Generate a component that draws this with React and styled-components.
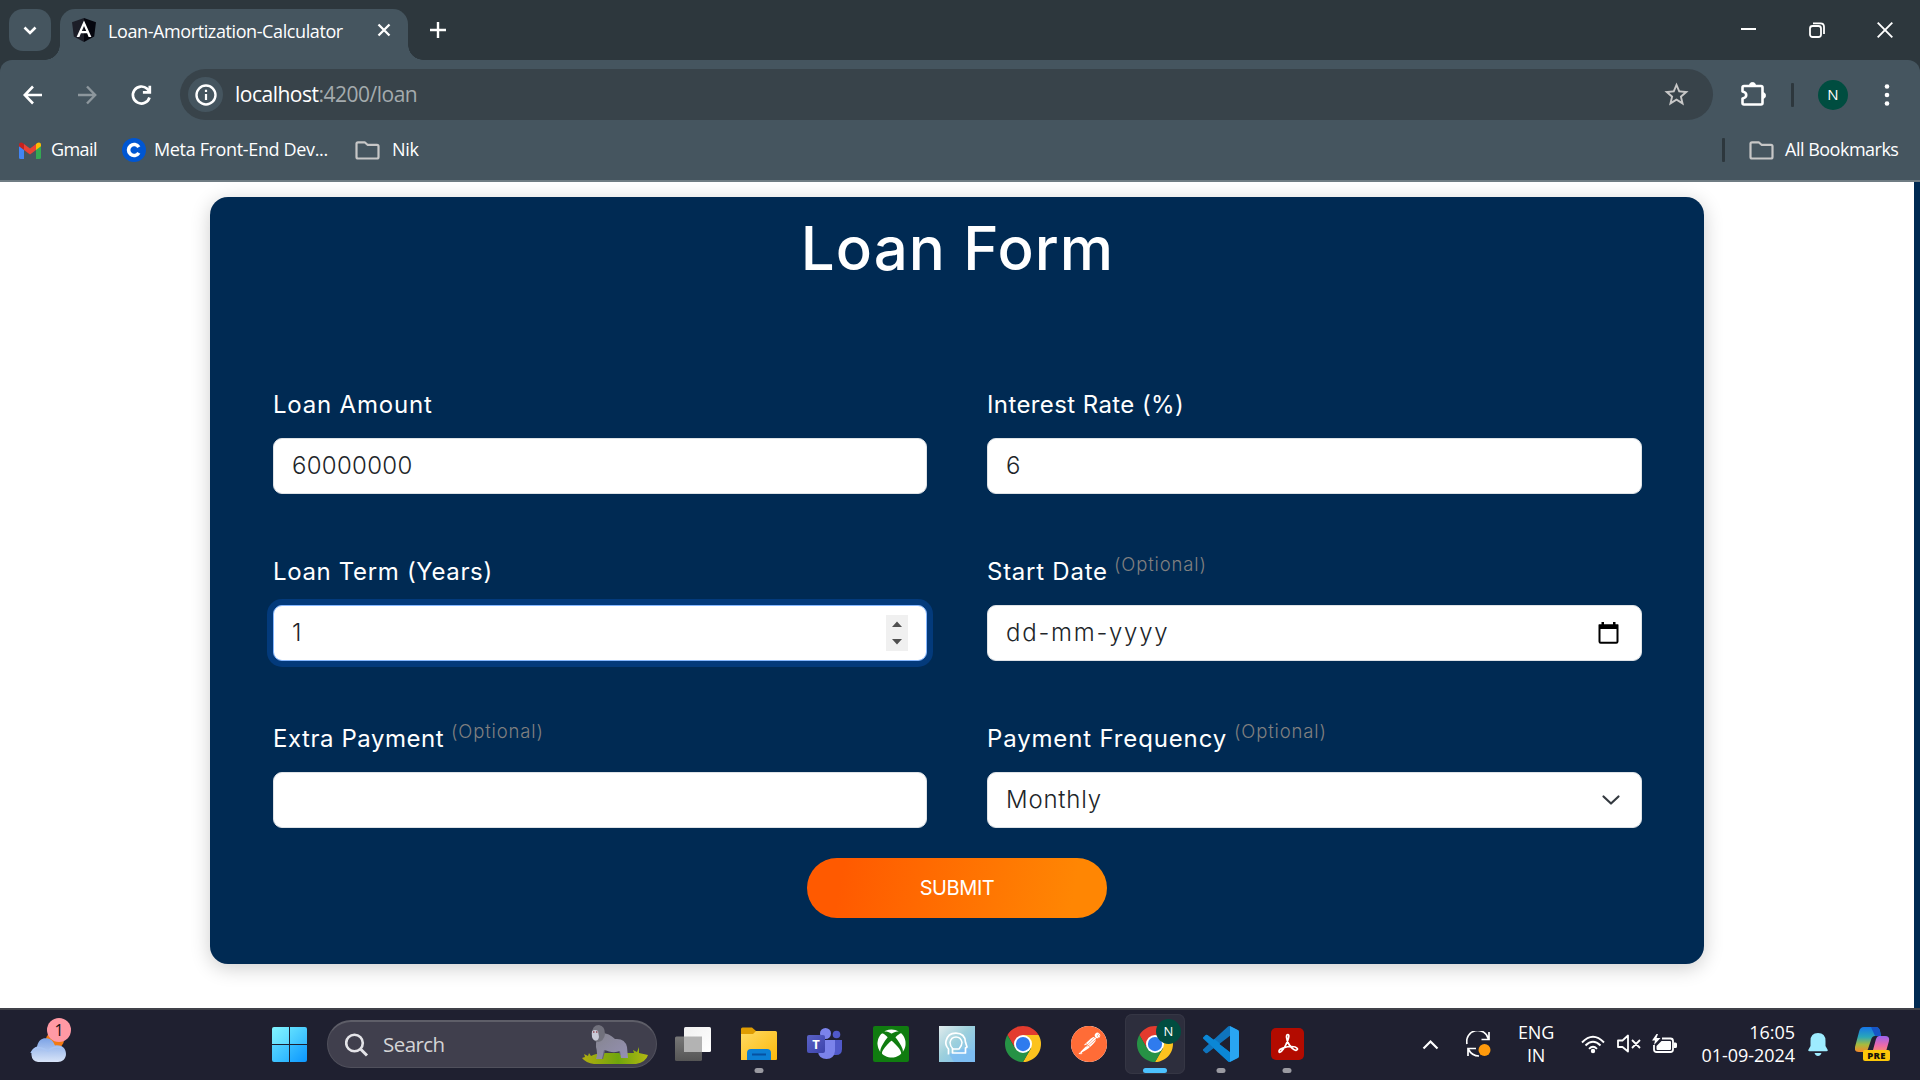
import React from 'react';
import styled, { createGlobalStyle, css } from 'styled-components';
import { FaXbox } from 'react-icons/fa';
import { SiPostman } from 'react-icons/si';
import { MdStarBorder } from 'react-icons/md';

const GlobalStyle = createGlobalStyle`
  * { box-sizing: border-box; }
  body { margin: 0; overflow: hidden; background: #fff; }
  svg { display: block; flex: none; }
`;

const system = `'Open Sans', 'Noto Sans', sans-serif`;
const geometric = `Inter, 'Liberation Sans', sans-serif`;

const Desktop = styled.div`
  width: 1920px;
  height: 1080px;
  display: flex;
  flex-direction: column;
  font-family: ${system};
  color: #fff;
`;

const Text = styled.span`
  display: block;
  flex: none;
  white-space: nowrap;
  width: ${p => (p.$w ? `${p.$w}px` : 'auto')};
  font-size: ${p => p.$size || 18}px;
  letter-spacing: ${p => p.$ls || 0}px;
  margin-left: ${p => p.$ml || 0}px;
  margin-top: ${p => p.$mt || 0}px;
  line-height: 24px;
`;

/* ---------- browser chrome ---------- */

const TabStrip = styled.div`
  height: 60px;
  flex: none;
  display: flex;
  align-items: flex-start;
  padding: 9px 0 0 9px;
  background: #2d373d;
`;

const TabSearch = styled.div`
  width: 42px;
  height: 42px;
  border-radius: 14px;
  display: grid;
  place-items: center;
  background: #45555f;
`;

const Tab = styled.div`
  position: relative;
  width: 348px;
  height: 51px;
  margin-left: 9px;
  padding: 0 0 9px 12px;
  border-radius: 15px 15px 0 0;
  display: flex;
  align-items: center;
  background: #45555f;

  &::before, &::after {
    content: '';
    position: absolute;
    bottom: 0;
    width: 15px;
    height: 15px;
  }
  &::before { left: -15px; background: radial-gradient(circle at 0 0, transparent 14.5px, #45555f 15px); }
  &::after { right: -15px; background: radial-gradient(circle at 100% 0, transparent 14.5px, #45555f 15px); }
`;

const NewTab = styled.div`
  height: 42px;
  margin-left: 22px;
  display: flex;
  align-items: center;
`;

const WindowButtons = styled.div`
  margin-left: auto;
  height: 42px;
  padding-right: 27px;
  display: flex;
  align-items: center;
  gap: 52px;
`;

const ToolbarBack = styled.div`
  flex: none;
  background: #2d373d;
`;

const Toolbar = styled.div`
  height: 122px;
  border-radius: 12px 12px 0 0;
  border-bottom: 2px solid #6f7c83;
  background: #45555f;
`;

const NavRow = styled.div`
  height: 69px;
  padding: 9px 0 9px 21px;
  display: flex;
  align-items: center;
`;

const NavIcons = styled.div`
  width: 159px;
  display: flex;
  gap: 30px;
`;

const AddressBar = styled.div`
  width: 1533px;
  height: 51px;
  padding: 0 22px 0 8px;
  border-radius: 26px;
  display: flex;
  align-items: center;
  background: #38434a;
`;

const SiteInfo = styled.div`
  width: 35px;
  height: 35px;
  border-radius: 50%;
  display: grid;
  place-items: center;
  background: #45555f;
`;

const Url = styled.span`
  flex: 1;
  margin: -1px 0 0 12px;
  font-size: 21px;
  line-height: 28px;
  letter-spacing: -0.5px;
  color: #a4abae;
  b { font-weight: 400; color: #fff; }
`;

const Divider = styled.div`
  width: 3px;
  height: 24px;
  border-radius: 1px;
  background: #2d373d;
  margin: ${p => p.$m};
`;

const Avatar = styled.div`
  width: ${p => p.$d}px;
  height: ${p => p.$d}px;
  border-radius: 50%;
  display: grid;
  place-items: center;
  background: #004d40;
  font-size: ${p => p.$size}px;
  line-height: 1;
`;

const BookmarkRow = styled.div`
  height: 51px;
  padding: 0 22px 9px 19px;
  display: flex;
  align-items: center;
`;

const Push = styled.div`
  flex: 1;
`;

/* ---------- page ---------- */

const Viewport = styled.main`
  height: 826px;
  flex: none;
  padding: 15px 0 0 210px;
  background: #fff;
  border-right: 6px solid #002a53;
  overflow: hidden;
`;

const Card = styled.section`
  width: 1494px;
  height: 767px;
  padding: 17px 62px 0 63px;
  border-radius: 18px;
  background: #002a53;
  box-shadow: 0 4px 20px rgba(0, 0, 0, 0.2);
  font-family: ${geometric};
  display: flex;
  flex-direction: column;
  align-items: center;
`;

const Title = styled.h1`
  margin: -1px 0 0;
  height: 72px;
  font-size: 60px;
  line-height: 71px;
  font-weight: 500;
  letter-spacing: 1.1px;
`;

const FormGrid = styled.div`
  width: 100%;
  margin-top: 99px;
  display: grid;
  grid-template-columns: 654px 655px;
  column-gap: 60px;
  grid-auto-rows: 167px;
`;

const Label = styled.label`
  display: flex;
  height: 54px;
  padding-top: 3px;
  font-size: 24px;
  line-height: 36px;
  font-weight: 400;
  white-space: nowrap;
`;

const LabelText = styled.span`
  width: ${p => p.$w}px;
  letter-spacing: ${p => p.$ls}px;
`;

const Optional = styled.span`
  margin: -8px 0 0 7px;
  font-size: 18.5px;
  font-weight: 300;
  letter-spacing: 0.85px;
  color: #808080;
`;

const Control = styled.div`
  height: 56px;
  border-radius: 9px;
  border: 1px solid #dee2e6;
  padding: 0 18px;
  display: flex;
  align-items: center;
  justify-content: space-between;
  background: #fff;
  color: #212529;
  font-size: 24px;
  line-height: 28px;
  font-weight: 300;
  letter-spacing: ${p => p.$ls || 0}px;
  ${p => p.$focused && css`
    border-color: #86b7fe;
    box-shadow: 0 0 0 6px #033a7b;
  `}
`;

const Spinner = styled.div`
  width: 22px;
  height: 36px;
  display: grid;
  place-items: center;
  background: #f0f0f0;
`;

const Submit = styled.button`
  flex: none;
  width: 300px;
  height: 60px;
  margin: -27px 1px 0 0;
  border: 0;
  border-radius: 30px;
  background: linear-gradient(100deg, #ff5a00 12%, #ff8603 88%);
  color: #fff;
  font-family: ${geometric};
  font-size: 20px;
  letter-spacing: -0.4px;
`;

/* ---------- taskbar ---------- */

const Taskbar = styled.footer`
  height: 72px;
  flex: none;
  border-top: 2px solid #404149;
  padding-bottom: 2px;
  background: #1f2030;
  display: flex;
  align-items: center;
`;

const Widgets = styled.div`
  position: relative;
  width: 36px;
  height: 70px;
  margin-left: 30px;
  padding-top: 22px;
`;

const Badge = styled.span`
  position: absolute;
  left: 17px;
  top: 9px;
  width: 24px;
  height: 24px;
  border-radius: 50%;
  background: #ff99a4;
  color: #111;
  font-size: 16px;
  line-height: 24px;
  text-align: center;
`;

const StartButton = styled.div`
  width: 35px;
  height: 35px;
  margin: 0 0 0 206px;
  display: grid;
  grid-template-columns: 17px 17px;
  gap: 1px;
  border-radius: 2px;
  overflow: hidden;
`;

const Pane = styled.i`
  height: 17px;
  background: ${p => p.$bg};
`;

const SearchBox = styled.div`
  width: 330px;
  height: 48px;
  margin: 0 0 0 20px;
  padding: 0 7px 0 17px;
  border-radius: 24px;
  border: 1px solid #50505c;
  border-top: 2px solid #5e5e68;
  display: flex;
  align-items: center;
  background: #403f4d;
  color: #d4d4d6;
`;

const Apps = styled.div`
  display: flex;
  margin-left: 6px;
  gap: 6px;
`;

const AppSlot = styled.div`
  position: relative;
  width: 60px;
  height: 60px;
  padding-bottom: 1px;
  border-radius: 7px;
  display: grid;
  place-items: center;
  ${p => p.$active && css`
    background: #2d2e3d;
    box-shadow: inset 0 0 0 1px #353644;
  `}
  &::after {
    content: '';
    display: ${p => (p.$running ? 'block' : 'none')};
    position: absolute;
    bottom: 1px;
    left: 50%;
    transform: translateX(-50%);
    width: ${p => (p.$active ? 24 : 9)}px;
    height: 5px;
    border-radius: 3px;
    background: ${p => (p.$active ? '#4cc2ff' : '#9a9aa1')};
  }
`;

const ProfileMark = styled.div`
  position: absolute;
  right: 4px;
  top: 5px;
`;

const Tray = styled.div`
  margin-left: auto;
  padding-right: 30px;
  display: flex;
  align-items: center;
`;

const Stack = styled.div`
  width: ${p => p.$w}px;
  margin-left: ${p => p.$ml}px;
  text-align: ${p => p.$align};
  font-size: 18px;
  line-height: 23.5px;
  letter-spacing: ${p => p.$ls}px;
  white-space: nowrap;
`;

const Spaced = styled.div`
  flex: none;
  margin-left: ${p => p.$ml}px;
`;

/* ---------- drawings ---------- */

const Line = ({ w = 18, h = w, box = `0 0 ${w} ${h}`, sw = 2, color = '#fff', children }) => (
  <svg width={w} height={h} viewBox={box} fill="none" stroke={color} strokeWidth={sw}>{children}</svg>
);

const Folder = () => (
  <Line w={25} h={19} sw={2.2} color="#c7c7c7">
    <path d="M1.500 3.200V16q0 1.500 1.500 1.500h19q1.500 0 1.500-1.500V5.300q0-1.500-1.500-1.500H12.500L9.700 1.300H3q-1.500 0-1.500 1.500z" strokeLinejoin="round" />
  </Line>
);

const AngularLogo = () => (
  <svg width="24" height="24" viewBox="0 0 24 24">
    <path d="M12 0 0 4.200l1.800 14.300L12 24z" fill="#1c1e28" />
    <path d="M12 0l12 4.200-1.800 14.300L12 24z" fill="#05060e" />
    <path d="M12 2.600 4.600 19h2.800l1.500-3.700h6.200l1.500 3.700h2.800zM12 8l2.200 5H9.800z" fill="#fff" fillRule="evenodd" />
  </svg>
);

const GmailLogo = () => (
  <svg width="22" height="17" viewBox="0 0 22 17">
    <path d="M0 4v11.500Q0 17 1.500 17H5V7z" fill="#4285f4" />
    <path d="M22 4v11.500q0 1.500-1.500 1.500H17V7z" fill="#34a853" />
    <path d="M5 2v6l6 4.600L17 8V2l-6 4.600z" fill="#ea4335" />
    <path d="M0 2.500V4.300L5 8V2L3.800 1C2.200-.3 0 .6 0 2.500z" fill="#c5221f" />
    <path d="M22 2.500V4.300L17 8V2l1.200-1C19.800-.3 22 .6 22 2.500z" fill="#fbbc04" />
  </svg>
);

const CourseraLogo = () => (
  <svg width="24" height="24" viewBox="0 0 24 24">
    <circle cx="12" cy="12" r="12" fill="#0056d2" />
    <path d="M16.800 9.200A5.500 5.500 0 1 0 16.800 14.800" fill="none" stroke="#fff" strokeWidth="3.600" />
  </svg>
);

const ChromeLogo = () => (
  <svg width="36" height="36" viewBox="0 0 48 48">
    <path d="M3.220 12A24 24 0 0 1 44.780 12H24L13.610 30z" fill="#e33b2e" />
    <path d="M44.780 12A24 24 0 0 1 24 48L34.390 30 24 12z" fill="#fcc31e" />
    <path d="M24 48A24 24 0 0 1 3.220 12L13.610 30H34.390z" fill="#269245" />
    <circle cx="24" cy="24" r="12" fill="#fff" />
    <circle cx="24" cy="24" r="9.500" fill="#2f7bee" />
  </svg>
);

const Gorilla = () => (
  <svg width="67" height="40" viewBox="0 0 67 40">
    <defs>
      <linearGradient id="grass" x2="1"><stop stopColor="#b2ae10" /><stop offset=".55" stopColor="#6fa50c" /><stop offset="1" stopColor="#b2b912" /></linearGradient>
      <linearGradient id="fur" x2="1" y2="1"><stop stopColor="#85858f" /><stop offset="1" stopColor="#9590b3" /></linearGradient>
    </defs>
    <path d="M0 33l3-1-1-3 4 2 1-3 2 3q5-3 15-3l28 0-1-3 4 2 2-5v6l9 2q-2 7-12 9H12Q4 38 0 33z" fill="url(#grass)" />
    <path d="M17 22h7l-3 12h-5zM35 20h6l1 10h-4z" fill="#646178" />
    <path d="M20 8Q27 8 33 14q10-1 12 8l1 11h-7l-1-7q-5 2-11 .500-3-1.500-5-1.500l-2 9h-6q2-5 0-12-1-8 6-14z" fill="url(#fur)" />
    <path d="M10 9Q10 0 17 0q6 1 6 9-1 7-7 8-6-1-6-8z" fill="#71717c" />
    <path d="M10 6q3-2 6 0l1 6q-1 5-5 3-3-2-2-9z" fill="#c9cad7" />
    <path d="M11 7h1.500M14 7h1.500" stroke="#8f4854" strokeWidth="1.400" />
  </svg>
);

const FilesLogo = () => (
  <svg width="36" height="34" viewBox="0 0 36 34">
    <defs><linearGradient id="files" x2="1" y2="1"><stop stopColor="#ffda62" /><stop offset="1" stopColor="#fbb90b" /></linearGradient></defs>
    <path d="M0 2q0-1.500 1.500-1.500H11L15 4v5H0z" fill="#df9c02" />
    <path d="M0 7h12l3-3h19.500Q36 4 36 5.500V32q0 1-1 1H0z" fill="url(#files)" />
    <path d="M6 33v-7q0-4 4-4h16q4 0 4 4v7z" fill="#0c7fd4" />
    <path d="M11 27.500h14" stroke="#0651a0" strokeWidth="2" />
  </svg>
);

const TeamsMark = styled.div`
  position: relative;
  width: 36px;
  height: 34px;
  span {
    position: absolute;
    left: 0;
    top: 8px;
    width: 18px;
    height: 18px;
    border-radius: 2px;
    background: linear-gradient(135deg, #5a62c6, #3c43ab);
    font-size: 13px;
    font-weight: 700;
    line-height: 18px;
    text-align: center;
  }
`;

const TeamsLogo = () => (
  <TeamsMark>
    <svg width="36" height="34" viewBox="0 0 36 34">
      <circle cx="29.500" cy="7.500" r="3.800" fill="#5059c9" />
      <path d="M26 13h9v9q0 6-6 6h-3z" fill="#5059c9" />
      <circle cx="18.500" cy="6.500" r="5.500" fill="#7b83eb" />
      <path d="M11 13h17v11q-1 8-8.500 8T11 25z" fill="#7b83eb" />
    </svg>
    <span>T</span>
  </TeamsMark>
);

const XboxTile = styled.div`
  width: 36px;
  height: 36px;
  border-radius: 2px;
  display: grid;
  place-items: center;
  background: #107c10;
`;

const PostmanDisc = styled.div`
  width: 36px;
  height: 36px;
  border-radius: 50%;
  background: #fff;
  color: #ff6c37;
`;

const HeadLogo = () => (
  <svg width="36" height="36" viewBox="0 0 36 36">
    <defs><linearGradient id="head" x2="1" y2="1"><stop stopColor="#e2ecee" /><stop offset=".45" stopColor="#9dd0dc" /><stop offset="1" stopColor="#78bdf4" /></linearGradient></defs>
    <path d="M0 0h36v36H0z" fill="url(#head)" />
    <path d="M10 28l5 8h21V25l-9-3z" fill="#7cbcf2" opacity=".8" />
    <g fill="none" stroke="#fff" strokeLinejoin="round">
      <path d="M9.500 28.500V23Q6 19 7 15 9 7 17 7.200q9 .3 9.500 9l1.500 4.800-1.500 1v5H13.500v-5" strokeWidth="1.700" />
      <path d="M14 23q-3-3-3-6.500 1-5.500 6-5.500t6 5.500q0 3-3 6.500h-6" strokeWidth="1.500" />
    </g>
  </svg>
);

const vs = 'M23.150 2.587L18.210.210a1.494 1.494 0 0 0-1.705.290l-9.460 8.630-4.120-3.128a.999.999 0 0 0-1.276.057L.327 7.261A1 1 0 0 0 .326 8.740L3.899 12 .326 15.260a1 1 0 0 0 .001 1.479L1.650 17.940a.999.999 0 0 0 1.276.057l4.120-3.128 9.460 8.630a1.492 1.492 0 0 0 1.704.290l4.942-2.377A1.500 1.500 0 0 0 24 20.060V3.939a1.500 1.500 0 0 0-.850-1.352zm-5.146 14.861L10.826 12l7.178-5.448v10.896z';

const CodeLogo = () => (
  <svg width="36" height="36" viewBox="0 0 24 24">
    <defs><clipPath id="vsc"><path d={vs} clipRule="evenodd" /></clipPath></defs>
    <g clipPath="url(#vsc)">
      <path d="M0 0h24v24H0z" fill="#0f74bd" />
      <path d="M0 8l3-3 15 12v7h-1z" fill="#0b87d5" />
      <path d="M18 0h6v24h-6z" fill="#29a5f2" />
    </g>
  </svg>
);

const AcrobatLogo = () => (
  <svg width="33" height="32" viewBox="0 0 33 32">
    <rect width="33" height="32" rx="5" fill="#b30b00" />
    <path d="M17 6.500c-2.500 0-1.500 5 .5 9 2 4 5.500 7 7.500 6.800 3-.5 1.500-3.800-4.500-3.800-5 0-12.500 2-12.500 4.700 0 3 4-.2 7-6.700 2-4 4-10 2-10z" fill="none" stroke="#fff" strokeWidth="1.700" />
  </svg>
);

const WeatherLogo = () => (
  <svg width="36" height="32" viewBox="0 0 36 32">
    <defs><linearGradient id="cloud" x2="0" y2="1"><stop stopColor="#7ca3e6" /><stop offset="1" stopColor="#d8e4f8" /></linearGradient></defs>
    <circle cx="25" cy="9" r="9" fill="#f27a12" />
    <path d="M8 31a8 8 0 0 1-1-15.500C9 7 14 6.500 18 7.500c5 1 6 5 7 7 6-1 11 2 11 8.500 0 5-4 8-8 8z" fill="url(#cloud)" />
    <path d="M1 22q4-8 13-4l4 2q6-6 14-3" fill="none" stroke="#a9c5f3" strokeWidth="1.500" />
  </svg>
);

const CopilotMark = styled.div`
  position: relative;
  width: 35px;
  height: 34px;
  span {
    position: absolute;
    left: 8px;
    top: 23px;
    width: 27px;
    height: 11px;
    border-radius: 2px;
    background: #fcc709;
    color: #17130a;
    font-size: 9.5px;
    font-weight: 800;
    line-height: 11px;
    letter-spacing: .3px;
    text-align: center;
  }
`;

const CopilotLogo = () => (
  <CopilotMark>
    <svg width="35" height="34" viewBox="0 0 35 34">
      <defs>
        <linearGradient id="cpa" x2="0" y2="1"><stop stopColor="#1675e8" /><stop offset=".4" stopColor="#2aa7b8" /><stop offset=".7" stopColor="#a6bb3e" /><stop offset="1" stopColor="#f78829" /></linearGradient>
        <linearGradient id="cpb" x2="0" y2="1"><stop stopColor="#9b63ee" /><stop offset=".5" stopColor="#ed6aa8" /><stop offset="1" stopColor="#ffa04b" /></linearGradient>
      </defs>
      <path d="M9 0h12q3 0 4 4l1 5h-6q-3 0-4 4l-3 9q-1 3-4 3H4q-5 0-4-5L4 5q1-5 5-5z" fill="url(#cpa)" />
      <path d="M16 0h5q3 0 4 4l1 5h-6z" fill="#1755c5" />
      <path d="M24 9h6q5 0 4 5l-4 14H14q3-1 4-5l3-11q1-3 3-3z" fill="url(#cpb)" />
    </svg>
    <span>PRE</span>
  </CopilotMark>
);

const Caret = () => (
  <Line w={17} h={11} sw={2.2}><path d="M1.500 9.500l7-7 7 7" /></Line>
);

const Field = ({ label, w, ls, optional, children }) => (
  <div>
    <Label>
      <LabelText $w={w} $ls={ls}>{label}</LabelText>
      {optional && <Optional>(Optional)</Optional>}
    </Label>
    {children}
  </div>
);

export default function App() {
  return (
    <Desktop>
      <GlobalStyle />
      <TabStrip>
        <TabSearch><Line w={14} h={9} sw={2.6}><path d="M1.500 1.500L7 7l5.500-5.500" /></Line></TabSearch>
        <Tab>
          <AngularLogo />
          <Text $w={269} $ml={12} $mt={2} $ls={-0.4}>Loan-Amortization-Calculator</Text>
          <Line w={14} sw={2.3}><path d="M1.500 1.500l11 11M12.500 1.500l-11 11" /></Line>
        </Tab>
        <NewTab><Line w={16} sw={2.4}><path d="M8 0v16M0 8h16" /></Line></NewTab>
        <WindowButtons>
          <Line w={16} sw={2}><path d="M0 7h15" /></Line>
          <Line w={16} sw={1.8}><rect x="1" y="4" width="11" height="11" rx="2.500" /><path d="M4 1.300h7.500q3.500 0 3.500 3.500V12" /></Line>
          <Line w={16} sw={1.9}><path d="M.7.7l14.600 14.600M15.300.7L.7 15.300" /></Line>
        </WindowButtons>
      </TabStrip>

      <ToolbarBack>
        <Toolbar>
          <NavRow>
            <NavIcons>
              <Line w={24} sw={2.6}><path d="M21 12H4.500M12 3.500L3.800 12l8.200 8.500" /></Line>
              <Line w={24} sw={2.4} color="#8d979d"><path d="M3 12h16.500M12 3.500l8.200 8.500-8.200 8.500" /></Line>
              <Line w={24} sw={2.7}><path d="M20.500 14.500a8.500 8.500 0 1 1-2.300-8.700L21 8.800" /><path d="M20.800 2.800v6.600h-6.900" /></Line>
            </NavIcons>
            <AddressBar>
              <SiteInfo>
                <Line w={22} sw={2.4}><circle cx="11" cy="11" r="9.500" /><path d="M11 10v6M11 5.700v2.400" strokeWidth="2.200" /></Line>
              </SiteInfo>
              <Url><b>localhost</b>:4200/loan</Url>
              <MdStarBorder size={29} color="#c7c7c7" />
            </AddressBar>
            <Spaced $ml={27}>
              <Line w={27} sw={2.6}>
                <path d="M4 5h17q1.500 0 1.500 1.500V22q0 1.500-1.500 1.500H4q-1.500 0-1.500-1.500v-4.500c5-1 5-6 0-7V6.500Q2.500 5 4 5z" strokeLinejoin="round" />
                <path d="M9.500 4.500a3 3 0 0 1 6 0M22.500 11.500a3 3 0 0 1 0 6" fill="#fff" strokeWidth="1" />
              </Line>
            </Spaced>
            <Divider $m="0 0 0 24px" />
            <Spaced $ml={24}><Avatar $d={30} $size={15}>N</Avatar></Spaced>
            <Spaced $ml={36}>
              <svg width="6" height="22" viewBox="0 0 6 22" fill="#fff"><circle cx="3" cy="2.500" r="2.300" /><circle cx="3" cy="11" r="2.300" /><circle cx="3" cy="19.500" r="2.300" /></svg>
            </Spaced>
          </NavRow>
          <BookmarkRow>
            <GmailLogo />
            <Text $w={71} $ml={10} $mt={-2} $ls={-0.6}>Gmail</Text>
            <CourseraLogo />
            <Text $w={201} $ml={8} $mt={-2} $ls={-0.35}>Meta Front-End Dev...</Text>
            <Folder />
            <Text $ml={12} $mt={-2} $ls={-0.3}>Nik</Text>
            <Push />
            <Divider $m="0 24px 0 0" />
            <Folder />
            <Text $w={113} $ml={11} $mt={-2} $ls={-0.5}>All Bookmarks</Text>
          </BookmarkRow>
        </Toolbar>
      </ToolbarBack>

      <Viewport>
        <Card>
          <Title>Loan Form</Title>
          <FormGrid>
            <Field label="Loan Amount" w={160} ls={0.8}>
              <Control $ls={0.3}>60000000</Control>
            </Field>
            <Field label="Interest Rate (%)" w={197} ls={0.4}>
              <Control>6</Control>
            </Field>
            <Field label="Loan Term (Years)" w={218} ls={0.65}>
              <Control $focused>
                1
                <Spinner>
                  <svg width="10" height="24" viewBox="0 0 10 24" fill="#505050"><path d="M0 6l5-5.500L10 6zM0 18h10l-5 5.500z" /></svg>
                </Spinner>
              </Control>
            </Field>
            <Field label="Start Date" w={120} ls={0.75} optional>
              <Control $ls={1.75}>
                dd-mm-yyyy
                <svg width="25" height="22" viewBox="0 0 25 22"><path d="M1.500 3.500h18v16q0 1.200-1.200 1.200H2.700q-1.200 0-1.200-1.200z" fill="none" stroke="#000" strokeWidth="2" /><path d="M1 2.500h19V7H1zM3.500 0h2.500v3H3.500zM15 0h2.500v3H15z" /></svg>
              </Control>
            </Field>
            <Field label="Extra Payment" w={171} ls={0.55} optional>
              <Control />
            </Field>
            <Field label="Payment Frequency" w={240} ls={0.85} optional>
              <Control $ls={0.8}>
                Monthly
                <Line w={22} h={12} sw={2.2} color="#343a40"><path d="M2.500 2.500L10 9.500l7.500-7" strokeLinecap="round" strokeLinejoin="round" /></Line>
              </Control>
            </Field>
          </FormGrid>
          <Submit>SUBMIT</Submit>
        </Card>
      </Viewport>

      <Taskbar>
        <Widgets>
          <WeatherLogo />
          <Badge>1</Badge>
        </Widgets>
        <StartButton>
          <Pane $bg="linear-gradient(135deg,#80f4ff,#5bd8ff)" />
          <Pane $bg="linear-gradient(135deg,#60dfff,#34baff)" />
          <Pane $bg="linear-gradient(135deg,#55d5ff,#2bb4ff)" />
          <Pane $bg="linear-gradient(135deg,#36bdff,#0c97ff)" />
        </StartButton>
        <SearchBox>
          <Line w={24} sw={2.6} color="#e4e4e8"><circle cx="9.500" cy="10" r="8.300" /><path d="M15.500 16l6.500 6.500" strokeWidth="3" /></Line>
          <Text $size={20.5} $ml={14} $mt={-1} $ls={-0.55}>Search</Text>
          <Push />
          <Gorilla />
        </SearchBox>
        <Apps>
          <AppSlot>
            <svg width="36" height="34" viewBox="0 0 36 34">
              <defs>
                <linearGradient id="tv" x2="1" y2="1"><stop stopColor="#f0f0f0" /><stop offset="1" stopColor="#fff" /></linearGradient>
                <linearGradient id="tv2" x2="0" y2="1"><stop stopColor="#777" /><stop offset="1" stopColor="#555" /></linearGradient>
              </defs>
              <rect x="0" y="9.500" width="27" height="24.500" rx="1.500" fill="url(#tv2)" />
              <rect x="9" y="0" width="27" height="25" rx="1.500" fill="url(#tv)" />
              <path d="M9 9.500h18V25H9z" fill="#b3b3b3" />
            </svg>
          </AppSlot>
          <AppSlot $running><FilesLogo /></AppSlot>
          <AppSlot><TeamsLogo /></AppSlot>
          <AppSlot><XboxTile><FaXbox size={29} /></XboxTile></AppSlot>
          <AppSlot><HeadLogo /></AppSlot>
          <AppSlot><ChromeLogo /></AppSlot>
          <AppSlot><PostmanDisc><SiPostman size={36} /></PostmanDisc></AppSlot>
          <AppSlot $running $active>
            <ChromeLogo />
            <ProfileMark><Avatar $d={25} $size={13}>N</Avatar></ProfileMark>
          </AppSlot>
          <AppSlot $running><CodeLogo /></AppSlot>
          <AppSlot $running><AcrobatLogo /></AppSlot>
        </Apps>
        <Tray>
          <Caret />
          <Spaced $ml={27}>
            <Line w={25} h={26} sw={1.7}>
              <path d="M1 13A11 11 0 0 1 22.500 8M23 1v7.500h-7.500M13 25Q6 25 2.500 18.500M2 25v-7.500h8" />
              <circle cx="18.500" cy="19" r="6" fill="#ff9a0c" stroke="none" />
            </Line>
          </Spaced>
          <Stack $w={36} $ml={27} $align="center" $ls={-0.2}>ENG<br />IN</Stack>
          <Spaced $ml={27}>
            <Line w={24} h={20} sw={1.9}>
              <path d="M1 8.500Q12-3 23 8.500M4.500 11.500q7.500-7.500 15 0M8 14.800q4-4 8 0" />
              <circle cx="12" cy="17" r="2.200" fill="#fff" stroke="none" />
            </Line>
          </Spaced>
          <Spaced $ml={12}>
            <Line w={24} h={20} sw={1.8}>
              <path d="M1 6.500h4.500L11 1.500v16l-5.500-4.500H1zM15 6l8 8M23 6l-8 8" strokeLinejoin="round" />
            </Line>
          </Spaced>
          <Spaced $ml={11}>
            <svg width="25" height="20" viewBox="0 0 25 20">
              <path d="M10 4.500h8.500q2.500 0 2.500 2.500v8.500q0 2.500-2.500 2.500h-14Q2 18 2 15.500V11" fill="none" stroke="#fff" strokeWidth="1.800" />
              <path d="M9.500 7H18q1 0 1 1v7q0 1-1 1H5.500q-1 0-1-1v-3zM22 8.500h1.500q1.500 0 1.500 1.500v2.500q0 1.500-1.500 1.500H22zM4.500 0L0 6.500h3L2 11l6.500-7h-4L6 0z" fill="#fff" />
            </svg>
          </Spaced>
          <Stack $w={96} $ml={22} $align="right" $ls={-0.05}>16:05<br />01-09-2024</Stack>
          <Spaced $ml={13}>
            <svg width="20" height="23" viewBox="0 0 20 23" fill="#9eecff"><path d="M10 0q7.500 0 7.500 8v5l2 3.500q.8 1.700-1 1.700h-17q-1.800 0-1-1.700l2-3.500V8q0-8 7.500-8zM6.500 20h7q-1 3-3.500 3t-3.500-3z" /></svg>
          </Spaced>
          <Spaced $ml={27}><CopilotLogo /></Spaced>
        </Tray>
      </Taskbar>
    </Desktop>
  );
}
